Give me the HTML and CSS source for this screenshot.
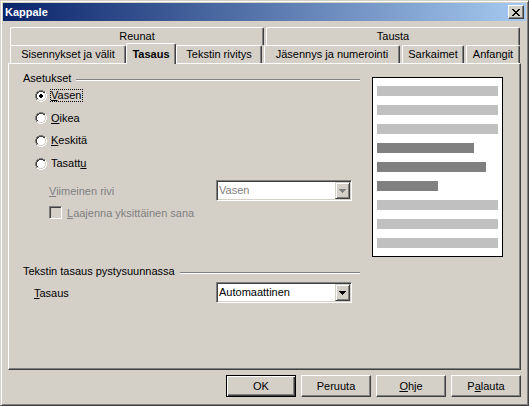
FILE: index.html
```html
<!DOCTYPE html>
<html>
<head>
<meta charset="utf-8">
<title>Kappale</title>
<link rel="stylesheet" href="styles.css">
</head>
<body>
<div class="window">
  <div class="titlebar">
    <span class="title">Kappale</span>
    <span class="close-btn">
      <svg width="8" height="7" viewBox="0 0 8 7" shape-rendering="crispEdges"><path fill="#000" d="M0 0h2v1H0zM6 0h2v1H6zM1 1h2v1H1zM5 1h2v1H5zM2 2h4v1H2zM3 3h2v1H3zM2 4h4v1H2zM1 5h2v1H1zM5 5h2v1H5zM0 6h2v1H0zM6 6h2v1H6z"/></svg>
    </span>
  </div>
  <div class="body">
    <div class="tabs">
      <div class="tabrow">
        <div class="tab w-reunat">Reunat</div>
        <div class="tab w-tausta">Tausta</div>
      </div>
      <div class="tabrow">
        <div class="tab w-sis">Sisennykset ja välit</div>
        <div class="tab w-tas selected">Tasaus</div>
        <div class="tab w-tek">Tekstin rivitys</div>
        <div class="tab w-jas">Jäsennys ja numerointi</div>
        <div class="tab w-sar">Sarkaimet</div>
        <div class="tab w-anf">Anfangit</div>
      </div>
    </div>
    <div class="panel">
      <div class="settings">
        <div class="group-head"><span>Asetukset</span><span class="rule"></span></div>
        <div class="radios">
          <div class="radio-row">
            <svg class="radio" width="12" height="12" viewBox="0 0 12 12" shape-rendering="crispEdges">
              <path fill="#808080" d="M4 0h4v1H4zM2 1h2v1H2zM8 1h2v1H8zM1 2h1v2H1zM0 4h1v4H0zM1 8h1v2H1z"/>
              <path fill="#404040" d="M4 1h4v1H4zM2 2h2v1H2zM8 2h2v1H8zM2 3h1v1H2zM1 4h1v4H1zM2 8h1v1H2z"/>
              <path fill="#d4d0c8" d="M9 3h1v1H9zM10 4h1v4h-1zM9 8h1v1H9zM2 9h2v1H2zM8 9h2v1H8zM4 10h4v1H4z"/>
              <path fill="#fff" d="M10 2h1v2h-1zM11 4h1v4h-1zM10 8h1v2h-1zM2 10h2v1H2zM8 10h2v1H8zM4 11h4v1H4zM4 2h4v1H4zM3 3h6v1H3zM2 4h8v4H2zM3 8h6v1H3zM4 9h4v1H4z"/>
              <path fill="#000" d="M5 4h2v1H5zM4 5h4v2H4zM5 7h2v1H5z"/>
            </svg>
            <span class="rlabel focus"><u>V</u>asen</span>
          </div>
          <div class="radio-row">
            <svg class="radio" width="12" height="12" viewBox="0 0 12 12" shape-rendering="crispEdges">
              <path fill="#808080" d="M4 0h4v1H4zM2 1h2v1H2zM8 1h2v1H8zM1 2h1v2H1zM0 4h1v4H0zM1 8h1v2H1z"/>
              <path fill="#404040" d="M4 1h4v1H4zM2 2h2v1H2zM8 2h2v1H8zM2 3h1v1H2zM1 4h1v4H1zM2 8h1v1H2z"/>
              <path fill="#d4d0c8" d="M9 3h1v1H9zM10 4h1v4h-1zM9 8h1v1H9zM2 9h2v1H2zM8 9h2v1H8zM4 10h4v1H4z"/>
              <path fill="#fff" d="M10 2h1v2h-1zM11 4h1v4h-1zM10 8h1v2h-1zM2 10h2v1H2zM8 10h2v1H8zM4 11h4v1H4zM4 2h4v1H4zM3 3h6v1H3zM2 4h8v4H2zM3 8h6v1H3zM4 9h4v1H4z"/>
            </svg>
            <span class="rlabel"><u>O</u>ikea</span>
          </div>
          <div class="radio-row">
            <svg class="radio" width="12" height="12" viewBox="0 0 12 12" shape-rendering="crispEdges">
              <path fill="#808080" d="M4 0h4v1H4zM2 1h2v1H2zM8 1h2v1H8zM1 2h1v2H1zM0 4h1v4H0zM1 8h1v2H1z"/>
              <path fill="#404040" d="M4 1h4v1H4zM2 2h2v1H2zM8 2h2v1H8zM2 3h1v1H2zM1 4h1v4H1zM2 8h1v1H2z"/>
              <path fill="#d4d0c8" d="M9 3h1v1H9zM10 4h1v4h-1zM9 8h1v1H9zM2 9h2v1H2zM8 9h2v1H8zM4 10h4v1H4z"/>
              <path fill="#fff" d="M10 2h1v2h-1zM11 4h1v4h-1zM10 8h1v2h-1zM2 10h2v1H2zM8 10h2v1H8zM4 11h4v1H4zM4 2h4v1H4zM3 3h6v1H3zM2 4h8v4H2zM3 8h6v1H3zM4 9h4v1H4z"/>
            </svg>
            <span class="rlabel"><u>K</u>eskitä</span>
          </div>
          <div class="radio-row">
            <svg class="radio" width="12" height="12" viewBox="0 0 12 12" shape-rendering="crispEdges">
              <path fill="#808080" d="M4 0h4v1H4zM2 1h2v1H2zM8 1h2v1H8zM1 2h1v2H1zM0 4h1v4H0zM1 8h1v2H1z"/>
              <path fill="#404040" d="M4 1h4v1H4zM2 2h2v1H2zM8 2h2v1H8zM2 3h1v1H2zM1 4h1v4H1zM2 8h1v1H2z"/>
              <path fill="#d4d0c8" d="M9 3h1v1H9zM10 4h1v4h-1zM9 8h1v1H9zM2 9h2v1H2zM8 9h2v1H8zM4 10h4v1H4z"/>
              <path fill="#fff" d="M10 2h1v2h-1zM11 4h1v4h-1zM10 8h1v2h-1zM2 10h2v1H2zM8 10h2v1H8zM4 11h4v1H4zM4 2h4v1H4zM3 3h6v1H3zM2 4h8v4H2zM3 8h6v1H3zM4 9h4v1H4z"/>
            </svg>
            <span class="rlabel">Tasatt<u>u</u></span>
          </div>
        </div>
        <div class="field-row last-line">
          <span class="field-label disabled"><u>V</u>iimeinen rivi</span>
          <div class="combo">
            <span class="combo-text disabled">Vasen</span>
            <span class="combo-btn">
              <svg width="7" height="4" viewBox="0 0 7 4" shape-rendering="crispEdges"><path fill="#808080" d="M0 0h7v1H0zM1 1h5v1H1zM2 2h3v1H2zM3 3h1v1H3z"/></svg>
            </span>
          </div>
        </div>
        <div class="check-row">
          <span class="checkbox"></span>
          <span class="disabled"><u>L</u>aajenna yksittäinen sana</span>
        </div>
        <div class="group-head second"><span>Tekstin tasaus pystysuunnassa</span><span class="rule"></span></div>
        <div class="field-row vert-line">
          <span class="field-label"><u>T</u>asaus</span>
          <div class="combo">
            <span class="combo-text">Automaattinen</span>
            <span class="combo-btn">
              <svg width="7" height="4" viewBox="0 0 7 4" shape-rendering="crispEdges"><path fill="#000" d="M0 0h7v1H0zM1 1h5v1H1zM2 2h3v1H2zM3 3h1v1H3z"/></svg>
            </span>
          </div>
        </div>
      </div>
      <div class="preview">
        <div class="bar light"></div>
        <div class="bar light"></div>
        <div class="bar light"></div>
        <div class="bar dark w97"></div>
        <div class="bar dark w109"></div>
        <div class="bar dark w61"></div>
        <div class="bar light"></div>
        <div class="bar light"></div>
        <div class="bar light"></div>
      </div>
    </div>
    <div class="buttons">
      <div class="btn default">OK</div>
      <div class="btn">Peruuta</div>
      <div class="btn"><u>O</u>hje</div>
      <div class="btn">P<u>a</u>lauta</div>
    </div>
  </div>
</div>
</body>
</html>
```

FILE: styles.css
```css
* {
  box-sizing: border-box;
}

html, body {
  margin: 0;
  padding: 0;
}

body {
  width: 529px;
  height: 406px;
  overflow: hidden;
  background: #d4d0c8;
  font-family: "Liberation Sans", Arial, sans-serif;
  font-size: 11px;
  color: #000;
}

.window {
  width: 529px;
  height: 406px;
  background: #d4d0c8;
  border: 1px solid;
  border-color: #d4d0c8 #404040 #404040 #d4d0c8;
  box-shadow: inset 1px 1px #fff, inset -1px -1px #808080;
  padding: 2px;
  display: flex;
  flex-direction: column;
}

/* Title bar */
.titlebar {
  height: 18px;
  display: flex;
  align-items: center;
  justify-content: space-between;
  padding: 0 2px 0 2px;
  background: linear-gradient(to right, #0a246a, #a6caf0);
}

.title {
  color: #fff;
  font-weight: bold;
  line-height: 18px;
}

.close-btn {
  width: 16px;
  height: 14px;
  display: flex;
  align-items: center;
  justify-content: center;
  background: #d4d0c8;
  border: 1px solid;
  border-color: #fff #404040 #404040 #fff;
  box-shadow: inset -1px -1px #808080;
  padding-right: 1px;
}

/* Body */
.body {
  flex: 1;
  padding: 6px 5px 0 5px;
  display: flex;
  flex-direction: column;
}

.tabs {
  margin-left: 2px;
  width: 510px;
}

.tabrow {
  display: flex;
  gap: 2px;
  height: 18px;
}

.tab {
  height: 18px;
  flex: none;
  background: #d4d0c8;
  border-top: 1px solid #fff;
  border-left: 1px solid #fff;
  border-right: 1px solid #404040;
  box-shadow: inset -1px 0 #808080;
  border-radius: 2px 2px 0 0;
  text-align: center;
  line-height: 17px;
  white-space: nowrap;
}

.tab.selected {
  position: relative;
  z-index: 2;
  height: 21px;
  margin: -2px -2px 0 -2px;
  padding-top: 2px;
  font-weight: bold;
}

.w-reunat { width: 254px; }
.w-tausta { width: 254px; }
.w-sis { width: 116px; }
.w-tas { width: 50px; }
.w-tek { width: 86px; }
.w-jas { width: 136px; }
.w-sar { width: 62px; }
.w-anf { width: 54px; }

/* Panel */
.panel {
  width: 513px;
  height: 307px;
  border: 1px solid;
  border-color: #fff #404040 #404040 #fff;
  box-shadow: inset -1px -1px #808080;
  padding: 8px 0 0 14px;
  display: flex;
  align-items: flex-start;
}

.settings {
  width: 337px;
  margin-right: 12px;
  display: flex;
  flex-direction: column;
}

.group-head {
  display: flex;
  align-items: flex-start;
  height: 12px;
  line-height: 13px;
  gap: 5px;
  white-space: nowrap;
}

.group-head.second {
  margin-top: 46px;
}

.rule {
  flex: 1;
  margin-top: 7px;
  height: 2px;
  border-top: 1px solid #808080;
  border-bottom: 1px solid #fff;
}

.radios {
  display: flex;
  flex-direction: column;
  padding-left: 12px;
}

.radio-row {
  height: 23px;
  display: flex;
  align-items: center;
}

.radio-row:nth-child(2) {
  height: 22px;
}

.radio {
  flex: none;
  margin-right: 3px;
}

.rlabel {
  line-height: 11px;
  border: 1px dotted transparent;
  padding-right: 1px;
}

.rlabel.focus {
  border-color: #000;
}

.field-row {
  display: grid;
  grid-template-columns: 193px 136px;
  align-items: center;
  height: 21px;
  margin-top: 5px;
}

.last-line .field-label {
  padding-left: 26px;
}

.vert-line .field-label {
  padding-left: 11px;
}

.disabled {
  color: #808080;
}

.combo {
  height: 21px;
  width: 136px;
  background: #fff;
  border: 1px solid;
  border-color: #808080 #fff #fff #808080;
  box-shadow: inset 1px 1px #404040, inset -1px -1px #d4d0c8;
  padding: 1px;
  display: flex;
  align-items: center;
}

.combo-text {
  flex: 1;
  padding-left: 1px;
  line-height: 17px;
}

.combo-btn {
  width: 15px;
  height: 17px;
  display: flex;
  align-items: center;
  justify-content: center;
  background: #d4d0c8;
  border: 1px solid;
  border-color: #d4d0c8 #404040 #404040 #d4d0c8;
  box-shadow: inset 1px 1px #fff, inset -1px -1px #808080;
}

.check-row {
  display: flex;
  align-items: center;
  height: 13px;
  margin-top: 5px;
  padding-left: 26px;
}

.checkbox {
  width: 13px;
  height: 13px;
  margin-right: 5px;
  background: #d4d0c8;
  border: 1px solid;
  border-color: #808080 #fff #fff #808080;
  box-shadow: inset 1px 1px #404040, inset -1px -1px #d4d0c8;
}

/* Preview */
.preview {
  margin-top: 5px;
  width: 131px;
  height: 180px;
  background: #fff;
  border: 1px solid #000;
  padding: 8px 4px;
  display: flex;
  flex-direction: column;
  gap: 9px;
}

.bar {
  height: 10px;
  width: 121px;
  flex: none;
}

.bar.light { background: #c0c0c0; }
.bar.dark { background: #808080; }
.bar.w97 { width: 97px; }
.bar.w109 { width: 109px; }
.bar.w61 { width: 61px; }

/* Buttons */
.buttons {
  display: flex;
  justify-content: flex-end;
  gap: 5px;
  margin-top: 5px;
}

.btn {
  width: 70px;
  height: 22px;
  display: flex;
  align-items: center;
  justify-content: center;
  border: 1px solid;
  border-color: #fff #404040 #404040 #fff;
  box-shadow: inset -1px -1px #808080;
}

.btn.default {
  border: 1px solid #000;
  box-shadow: inset 1px 1px #fff, inset -1px -1px #404040, inset -2px -2px #808080;
}
```
